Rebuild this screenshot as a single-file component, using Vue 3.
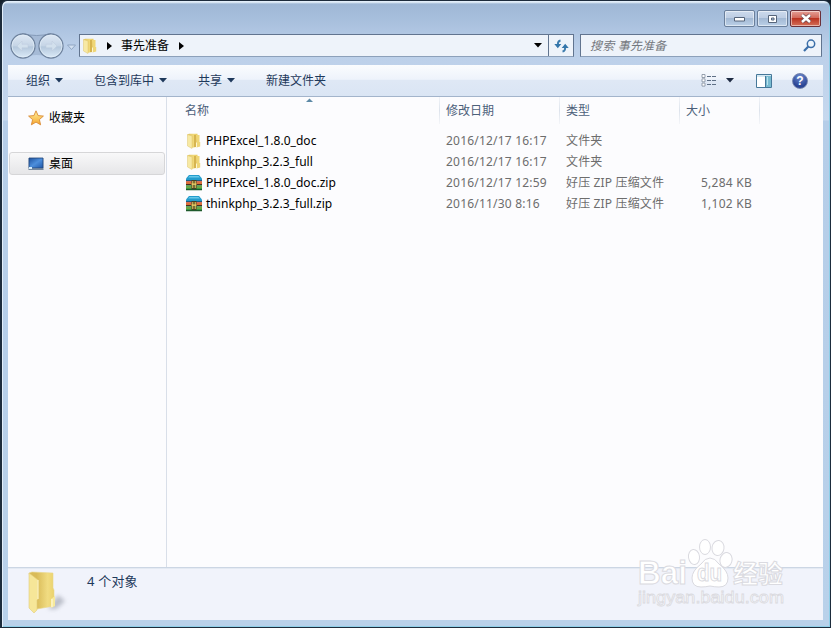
<script setup>
const menus = [
  { label: '组织', arrow: true },
  { label: '包含到库中', arrow: true },
  { label: '共享', arrow: true },
  { label: '新建文件夹', arrow: false },
]

const files = [
  { name: 'PHPExcel_1.8.0_doc', date: '2016/12/17 16:17', type: '文件夹', size: '', zip: false },
  { name: 'thinkphp_3.2.3_full', date: '2016/12/17 16:17', type: '文件夹', size: '', zip: false },
  { name: 'PHPExcel_1.8.0_doc.zip', date: '2016/12/17 12:59', type: '好压 ZIP 压缩文件', size: '5,284 KB', zip: true },
  { name: 'thinkphp_3.2.3_full.zip', date: '2016/11/30 8:16', type: '好压 ZIP 压缩文件', size: '1,102 KB', zip: true },
]
</script>

<template>
  <div class="window">
    <svg width="0" height="0" class="defs">
      <defs>
        <linearGradient id="gold" x1="0" x2="1">
          <stop offset="0" stop-color="#e0c362" />
          <stop offset="0.6" stop-color="#f0d878" />
          <stop offset="1" stop-color="#e8cb60" />
        </linearGradient>
        <linearGradient id="orb" x1="0" y1="0" x2="0" y2="1">
          <stop offset="0" stop-color="#dfe9f5" />
          <stop offset="0.48" stop-color="#c6d5e6" />
          <stop offset="0.54" stop-color="#b5c8dd" />
          <stop offset="1" stop-color="#dcebf8" />
        </linearGradient>
        <linearGradient id="screen" x1="0" y1="0" x2="1" y2="1">
          <stop offset="0" stop-color="#1c4f9c" />
          <stop offset="0.5" stop-color="#4d8fdc" />
          <stop offset="1" stop-color="#1e56a8" />
        </linearGradient>
        <linearGradient id="star" x1="0" y1="0" x2="0" y2="1">
          <stop offset="0" stop-color="#fff3a0" />
          <stop offset="1" stop-color="#f6a52c" />
        </linearGradient>
        <symbol id="folder" viewBox="0 0 16 16">
          <path d="M1.500 1.500 3 .7h8.500v13L5 15z" fill="url(#gold)" />
          <path d="M8 2h4v12H8z" fill="#d6b450" />
          <path d="M1.500 1.500 6 3v12.500L1.500 13z" fill="#f7e9a4" stroke="#e0c670" stroke-width=".5" />
          <path d="M10 2h3.500v7h.7v4.500l-3.700 1z" fill="#efd677" />
          <path d="M10.500 9.500v4.500" stroke="#fdf6cf" />
        </symbol>
        <symbol id="zip" viewBox="0 0 16 16">
          <path d="M3 0h10l3 3.500V6H0V3.500z" fill="#249ccc" />
          <path d="M3.500 1h9l1.300 1.500H2.200z" fill="#67c8ea" />
          <path d="M0 5h16v1.200H0z" fill="#1d5e80" />
          <path d="M0 6.200h16V9H0z" fill="#dc4b30" />
          <path d="M0 9h16v1.300H0z" fill="#4a2d20" />
          <path d="M0 10.300h16V14H0z" fill="#379a43" />
          <path d="M0 14h16v1.300H0z" fill="#1e5a2c" />
          <path d="M0 7.500h16v1H0zM0 11.500h16v1H0z" fill="#dbb84c" opacity=".7" />
          <path d="M5.500 5h5v9h-5z" fill="#4b4024" />
          <path d="M6.300 6h1v7h-1zM8.700 6h1v7h-1zM5.500 8.600h5v1.200h-5z" fill="#f3d869" />
        </symbol>
      </defs>
    </svg>

    <header class="titlebar">
      <div class="caption">
        <button class="cap-btn min"><svg width="13" height="6" viewBox="0 0 13 6"><path d="M1.500 1.500h10v3.500h-10z" fill="#fff" stroke="#56657a" /></svg></button>
        <button class="cap-btn max"><svg width="11" height="10" viewBox="0 0 11 10"><path d="M1.500 1.500h8v7h-8z" fill="#fff" stroke="#56657a" /><path d="M4.500 4h2.500v2H4.500z" fill="#b6c8dd" stroke="#56657a" /></svg></button>
        <button class="cap-btn close"><svg width="14" height="11" viewBox="0 0 14 11"><path d="m3 2 8 7M11 2 3 9" stroke="#6e4a50" stroke-width="4" /><path d="m3 2 8 7M11 2 3 9" stroke="#fff" stroke-width="2.500" /></svg></button>
      </div>
    </header>

    <div class="nav">
      <svg class="orbs" width="69" height="30" viewBox="0 0 69 30">
        <path d="M14 3q15 4 29 0v23q-14-4-29 0z" fill="#a5bad6" />
        <path d="M14 2.500q15 4 29 0" fill="none" stroke="#8399b7" />
        <circle cx="15" cy="15" r="12" fill="url(#orb)" stroke="#70849f" stroke-width="1.300" />
        <circle cx="43" cy="15" r="12" fill="url(#orb)" stroke="#70849f" stroke-width="1.300" />
        <circle cx="15" cy="15" r="11" fill="none" stroke="#e4f0fa" stroke-opacity=".7" />
        <circle cx="43" cy="15" r="11" fill="none" stroke="#e4f0fa" stroke-opacity=".7" />
        <path d="m14 10-5 5 5 5v-3.200h6v-3.600h-6z" fill="#d2e0ed" stroke="#bccbdc" stroke-width=".5" />
        <path d="m44 10 5 5-5 5v-3.200h-6v-3.600h6z" fill="#d2e0ed" stroke="#bccbdc" stroke-width=".5" />
        <path d="M59.500 14h8l-4 4.500z" fill="#d3e1f2" stroke="#8fa5c2" />
      </svg>
      <div class="address">
        <svg class="addr-folder" width="16" height="16"><use href="#folder" /></svg>
        <svg class="crumb-arrow" width="5" height="8" viewBox="0 0 5 8"><path d="M0 0v8l5-4z" /></svg>
        <span class="crumb">事先准备</span>
        <svg class="crumb-arrow last" width="5" height="8" viewBox="0 0 5 8"><path d="M0 0v8l5-4z" /></svg>
        <svg class="drop" width="8" height="5" viewBox="0 0 8 5"><path d="M0 0h8L4 4.500z" /></svg>
        <div class="refresh">
          <svg width="15" height="14" viewBox="0 0 15 14">
            <path d="M6.500 1.500Q3.800 2 3.800 5.500M8.500 12.500Q11.200 12 11.200 8.500" fill="none" stroke="#3e7dae" stroke-width="1.900" />
            <path d="M.3 5h7L3.800 9.300zM7.700 9h7l-3.500-4.300z" fill="#3476ab" />
          </svg>
        </div>
      </div>
      <div class="search">
        <span>搜索 事先准备</span>
        <svg width="13" height="13" viewBox="0 0 13 13">
          <circle cx="8" cy="4.800" r="3.700" fill="#edf5fc" stroke="#3b6ea8" stroke-width="1.500" />
          <path d="M5.300 7.600 1 12" stroke="#3b6ea8" stroke-width="2.200" />
        </svg>
      </div>
    </div>

    <div class="client">
      <div class="toolbar">
        <div v-for="menu in menus" :key="menu.label" class="menu">
          <span>{{ menu.label }}</span>
          <svg v-if="menu.arrow" width="8" height="5" viewBox="0 0 8 5"><path d="M0 0h8L4 4.600z" fill="#1e395b" /></svg>
        </div>
        <div class="tools">
          <svg width="16" height="13" viewBox="0 0 16 13">
            <path d="M1 .5h3v3H1zM1 4.800h3v3H1zM1 9.100h3v3H1z" fill="#fff" stroke="#7f8b9c" stroke-width=".8" />
            <path d="M6 2.500h4M11 2.500h4M6 6.500h4M11 6.500h4M6 10.500h4M11 10.500h4" stroke="#5e6f85" />
          </svg>
          <svg class="view-drop" width="8" height="5" viewBox="0 0 8 5"><path d="M0 0h8L4 4.600z" fill="#1e2b42" /></svg>
          <svg class="preview" width="16" height="14" viewBox="0 0 16 14">
            <path d="M.5.5h15v13H.5z" fill="#fff" stroke="#467899" />
            <path d="M1 1h14v2H1z" fill="#d5e8f2" />
            <path d="M10 2h5v11h-5z" fill="#79bbd0" />
            <path d="M9.500 2v11" stroke="#467899" />
            <path d="M11.500 3v8" stroke="#b9e2ee" />
          </svg>
          <div class="help">?</div>
        </div>
      </div>

      <div class="content">
        <aside class="sidebar">
          <div class="side-item">
            <svg width="16" height="16" viewBox="0 0 16 16"><path d="m8 .8 2.100 4.800 5.300.5-4 3.500 1.200 5.200L8 12.100l-4.600 2.700 1.200-5.200-4-3.500 5.300-.5z" fill="url(#star)" stroke="#d98a35" stroke-width=".9" stroke-linejoin="round" /></svg>
            <span>收藏夹</span>
          </div>
          <div class="side-item selected">
            <svg width="16" height="14" viewBox="0 0 16 14">
              <path d="M.5 1h15v11.500H.5z" fill="#b9c6d6" />
              <path d="M1 1h14v10H1z" fill="url(#screen)" stroke="#214477" stroke-width=".8" />
              <path d="M.5 11.500h15v1.200H.5z" fill="#5a7089" />
              <path d="M1 10h3v2H1z" fill="#d8eefb" />
            </svg>
            <span>桌面</span>
          </div>
        </aside>

        <main class="list">
          <div class="row head">
            <div class="cell name">
              <svg class="sort" width="7" height="4" viewBox="0 0 7 4"><path d="m0 4 3.500-3.500L7 4z" fill="#5d89a6" /></svg>
              名称
            </div>
            <div class="cell">修改日期</div>
            <div class="cell">类型</div>
            <div class="cell">大小</div>
          </div>
          <div v-for="file in files" :key="file.name" class="row">
            <div class="cell name">
              <svg width="16" height="16"><use :href="file.zip ? '#zip' : '#folder'" /></svg>
              <span>{{ file.name }}</span>
            </div>
            <div class="cell date">{{ file.date }}</div>
            <div class="cell type">{{ file.type }}</div>
            <div class="cell size">{{ file.size }}</div>
          </div>
        </main>
      </div>

      <footer class="details">
        <svg class="big-folder" width="44" height="46" viewBox="0 0 44 46">
          <defs>
            <linearGradient id="inner" x1="0" x2="1">
              <stop offset="0.3" stop-color="#d9bb58" />
              <stop offset="0.75" stop-color="#f1dc82" />
              <stop offset="1" stop-color="#ebd26c" />
            </linearGradient>
            <filter id="soft" x="-30%" y="-30%" width="160%" height="160%"><feGaussianBlur stdDeviation="2" /></filter>
          </defs>
          <path d="m22 38 10-14 7 6-9 8z" fill="#8b909c" opacity=".55" filter="url(#soft)" />
          <path d="m3 2 3-1 21 1v15l1 2v16l-17 3z" fill="url(#inner)" stroke="#e9d68c" stroke-width=".6" />
          <path d="m25 28 4-3v10l-4 2z" fill="#f7e99b" />
          <path d="M26 28v8" stroke="#fffbe0" />
          <path d="m3 2 9 7v19l-1 1v10l-3 3-5-5z" fill="#f6e698" stroke="#e3ce7c" stroke-width=".6" />
          <path d="M12 9v19" stroke="#fff9d0" />
        </svg>
        <span class="count">4 个对象</span>
      </footer>
    </div>

    <svg class="watermark" width="156" height="80" viewBox="0 0 156 80">
      <g fill="#fff" stroke="#dadae0">
        <ellipse cx="58" cy="27" rx="5.500" ry="7.500" transform="rotate(-8 58 27)" />
        <ellipse cx="69" cy="17" rx="5.500" ry="7.500" />
        <ellipse cx="82" cy="18" rx="6" ry="7.500" transform="rotate(8 82 18)" />
        <ellipse cx="90" cy="30" rx="6" ry="7.500" transform="rotate(15 90 30)" />
        <path d="M74 28q5 0 9 6 9 7 9 14 0 9-9 9-4 0-9-1-5 1-9 1-9 0-9-9 0-7 9-14 4-6 9-6z" />
        <text x="2" y="54" class="wm-brand" textLength="49" lengthAdjust="spacingAndGlyphs">Bai</text>
        <text x="61" y="51" class="wm-du" textLength="25" lengthAdjust="spacingAndGlyphs">du</text>
        <text x="97" y="53" class="wm-cn">经验</text>
        <text x="2" y="73" class="wm-url" textLength="146" lengthAdjust="spacingAndGlyphs">jingyan.baidu.com</text>
      </g>
    </svg>
  </div>
</template>

<style>
body {
  margin: 0;
  background: #14202c;
}
</style>

<style scoped>
.window {
  position: relative;
  box-sizing: border-box;
  width: 831px;
  height: 628px;
  padding: 0 7px 7px 6px;
  border: 2px solid #1d2c3c;
  border-width: 1px 1px 1px 2px;
  border-radius: 7px 7px 0 0;
  background: linear-gradient(#e8f2fb 0, #e8f2fb 1px, #9fb8d6 3px, #a5bddb 15px, #bbcfe9 48px, #c6d8ee 119px, #b5cde8 120px, #b9d1ea 100%);
  box-shadow: inset 1px 1px 0 #e2eefa, inset -1px -1px 0 #8fcfe8;
  font: 12px/16px 'Noto Sans', 'Noto Sans CJK SC', sans-serif;
  color: #000;
  overflow: hidden;
}

.defs {
  position: absolute;
}

.titlebar {
  height: 30px;
  padding-top: 9px;
  box-sizing: border-box;
}

.caption {
  display: flex;
  justify-content: flex-end;
  gap: 2px;
  padding-right: 2px;
}

.cap-btn {
  display: flex;
  align-items: center;
  justify-content: center;
  box-sizing: border-box;
  width: 31px;
  height: 17px;
  padding: 0;
  border: 1px solid #6a7f9b;
  border-radius: 2px;
  background: linear-gradient(#ccdaec 0, #bdcde3 46%, #a3b9d4 50%, #bbd0e7 100%);
  box-shadow: inset 0 0 0 1px rgba(255, 255, 255, 0.5);
}

.cap-btn.close {
  background: linear-gradient(#e5a198 0, #d3685a 46%, #bb3422 50%, #d4705a 100%);
  border-color: #6b3039;
}

.nav {
  display: flex;
  height: 34px;
}

.address {
  display: flex;
  align-items: center;
  box-sizing: border-box;
  width: 495px;
  height: 23px;
  margin: 3px 0 0 2px;
  border: 1px solid #61748f;
  border-bottom-color: #8ca0ba;
  background: #eef3fa;
}

.addr-folder {
  margin-left: 2px;
}

.crumb-arrow {
  margin-left: 9px;
}

.crumb {
  margin: 0 9px;
}

.crumb-arrow.last {
  margin-left: 1px;
}

.drop {
  margin-left: auto;
  margin-right: 6px;
}

.refresh {
  display: flex;
  align-items: center;
  justify-content: center;
  width: 24px;
  height: 21px;
  border-left: 1px solid #61748f;
}

.search {
  display: flex;
  align-items: center;
  justify-content: space-between;
  box-sizing: border-box;
  width: 242px;
  height: 23px;
  margin: 3px 0 0 6px;
  padding: 0 5px 0 9px;
  border: 1px solid #61748f;
  border-bottom-color: #8ca0ba;
  background: #eef3fa;
  color: #75797f;
  font-style: italic;
}

.search span {
  letter-spacing: 0.2px;
}

.client {
  display: flex;
  flex-direction: column;
  height: 555px;
  width: 815px;
  background: #fcfcfe;
}

.toolbar {
  display: flex;
  align-items: center;
  box-sizing: border-box;
  height: 32px;
  padding: 0 15px 0 18px;
  border-bottom: 1px solid #a3b4cb;
  background: linear-gradient(#fafcfe 0, #eef3fb 46%, #dfe8f5 50%, #dae5f4 100%);
  color: #1e395b;
}

.menu {
  display: flex;
  align-items: center;
  gap: 5px;
  margin-right: 31px;
}

.tools {
  display: flex;
  align-items: center;
  margin-left: auto;
}

.view-drop {
  margin: 0 22px 0 9px;
}

.help {
  width: 14px;
  height: 14px;
  margin-left: 20px;
  border: 1px solid #7484ad;
  border-radius: 50%;
  background: radial-gradient(circle at 50% 20%, #6c8bd0, #2b4595 70%);
  color: #fff;
  font: bold 12px/14px 'Liberation Sans', sans-serif;
  text-align: center;
}

.content {
  display: flex;
  height: 470px;
}

.sidebar {
  box-sizing: border-box;
  width: 159px;
  padding: 9px 1px 0;
  border-right: 1px solid #d9dfe9;
}

.side-item {
  display: flex;
  align-items: center;
  gap: 5px;
  box-sizing: border-box;
  height: 24px;
  padding-left: 18px;
  border: 1px solid transparent;
  border-radius: 3px;
}

.side-item.selected {
  height: 23px;
  margin-top: 22px;
  border-color: #d6d6d8;
  background: linear-gradient(#f8f8f9, #e6e6e8);
}

.list {
  flex: 1;
}

.row {
  display: grid;
  grid-template-columns: 273px 120px 120px 80px;
  height: 21px;
  color: #6d6d6d;
}

.cell {
  display: flex;
  align-items: center;
  padding-left: 6px;
  white-space: nowrap;
}

.name {
  padding-left: 19px;
  gap: 4px;
  color: #000;
  letter-spacing: 0.03px;
}

.date {
  letter-spacing: 0.2px;
}

.type {
  letter-spacing: 0.15px;
}

.size {
  justify-content: flex-end;
  padding-right: 8px;
  letter-spacing: 0.25px;
}

.head {
  height: 33px;
}

.head .cell {
  position: relative;
  box-sizing: border-box;
  height: 27px;
  border-right: 1px solid;
  border-image: linear-gradient(#f3f5f9, #dde3ec 50%, #f6f7fa) 1;
  border-width: 0 1px 0 0;
  color: #4c607a;
}

.head .name {
  padding-left: 18px;
}

.sort {
  position: absolute;
  top: 1px;
  left: 139px;
}

.details {
  display: flex;
  box-sizing: border-box;
  height: 53px;
  border-top: 1px solid #ccd6e4;
  background: #f1f3fb;
  box-shadow: inset 0 1px 0 #e4eaf3;
  color: #1e395b;
}

.big-folder {
  margin: 3px 0 0 18px;
}

.count {
  margin: 5px 0 0 17px;
  font-size: 13px;
  letter-spacing: 0.2px;
}

.watermark {
  position: absolute;
  left: 634px;
  top: 529px;
}

.wm-brand {
  font: bold 33px 'Liberation Sans', sans-serif;
}

.wm-du {
  font: bold 23px 'Liberation Sans', sans-serif;
}

.wm-cn {
  font: bold 25px 'Noto Sans CJK SC', sans-serif;
}

.wm-url {
  font: 16px 'Liberation Sans', sans-serif;
  stroke-width: 0.8;
}
</style>
